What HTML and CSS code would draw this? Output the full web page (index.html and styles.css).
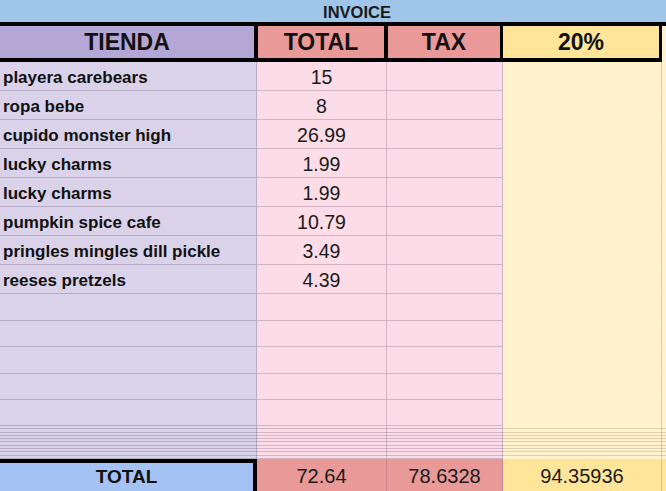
FILE: index.html
```html
<!DOCTYPE html>
<html lang="es">
<head>
<meta charset="utf-8">
<title>Invoice</title>
<link rel="stylesheet" href="styles.css">
</head>
<body>
<div class="sheet">
  <div class="band">INVOICE</div>
  <div class="head">
    <div class="hcells">
      <div class="h h-store">TIENDA</div>
      <div class="h h-total">TOTAL</div>
      <div class="h h-tax">TAX</div>
      <div class="h h-pct">20%</div>
    </div>
    <div class="h-extra"></div>
  </div>
  <div class="grid">
    <div class="c c1">playera carebears</div><div class="c c2">15</div><div class="c c3"></div><div class="c c4"></div><div class="c c5"></div>
    <div class="c c1">ropa bebe</div><div class="c c2">8</div><div class="c c3"></div><div class="c c4"></div><div class="c c5"></div>
    <div class="c c1">cupido monster high</div><div class="c c2">26.99</div><div class="c c3"></div><div class="c c4"></div><div class="c c5"></div>
    <div class="c c1">lucky charms</div><div class="c c2">1.99</div><div class="c c3"></div><div class="c c4"></div><div class="c c5"></div>
    <div class="c c1">lucky charms</div><div class="c c2">1.99</div><div class="c c3"></div><div class="c c4"></div><div class="c c5"></div>
    <div class="c c1">pumpkin spice cafe</div><div class="c c2">10.79</div><div class="c c3"></div><div class="c c4"></div><div class="c c5"></div>
    <div class="c c1">pringles mingles dill pickle</div><div class="c c2">3.49</div><div class="c c3"></div><div class="c c4"></div><div class="c c5"></div>
    <div class="c c1">reeses pretzels</div><div class="c c2">4.39</div><div class="c c3"></div><div class="c c4"></div><div class="c c5"></div>
    <div class="c c1"></div><div class="c c2"></div><div class="c c3"></div><div class="c c4"></div><div class="c c5"></div>
    <div class="c c1"></div><div class="c c2"></div><div class="c c3"></div><div class="c c4"></div><div class="c c5"></div>
    <div class="c c1"></div><div class="c c2"></div><div class="c c3"></div><div class="c c4"></div><div class="c c5"></div>
    <div class="c c1"></div><div class="c c2"></div><div class="c c3"></div><div class="c c4"></div><div class="c c5"></div>
    <div class="c c1"></div><div class="c c2"></div><div class="c c3"></div><div class="c c4"></div><div class="c c5"></div>
    <div class="c c1 stripe"></div><div class="c c2 stripe"></div><div class="c c3 stripe"></div><div class="c c4 stripe"></div><div class="c c5 stripe"></div>
  </div>
  <div class="totals">
    <div class="t t-label">TOTAL</div>
    <div class="t t-red">72.64</div>
    <div class="t t-red">78.6328</div>
    <div class="t t-yellow">94.35936</div>
    <div class="t t-yellow t-extra"></div>
  </div>
</div>
</body>
</html>
```

FILE: styles.css
```css
* { box-sizing: border-box; }
html, body {
  margin: 0;
  padding: 0;
  background: #ffffff;
}
body {
  font-family: "Liberation Sans", Arial, sans-serif;
  color: #111;
  width: 666px;
  height: 491px;
  overflow: hidden;
}
.sheet {
  width: 666px;
}
.band {
  height: 22px;
  background: #9fc5e8;
  font-weight: bold;
  font-size: 16.5px;
  line-height: 24px;
  text-align: center;
  padding-left: 48px;
  color: #1a1a1a;
}
.head {
  display: flex;
  height: 40px;
}
.hcells {
  width: 662px;
  background: #000;
  padding: 4px 0;
  display: flex;
}
.h {
  height: 32px;
  font-weight: bold;
  font-size: 23px;
  line-height: 33px;
  text-align: center;
  color: #111;
}
.h-store { width: 254px; margin-right: 4px; background: #b4a7d6; }
.h-total { width: 126px; margin-right: 4px; background: #ea9999; }
.h-tax { width: 112px; margin-right: 3px; background: #ea9999; }
.h-pct { width: 156px; background: #ffe599; }
.h-extra {
  flex: 1;
  background: #fff2cc;
  border-top: 4px solid #000;
}
.grid {
  display: grid;
  grid-template-columns: 257px 130px 116px 159px 1fr;
  grid-template-rows: repeat(8, 29px) 27px 26px 27px 26px 26px 33px;
}
.c {
  border-right: 1px solid rgba(60, 40, 70, 0.22);
  border-bottom: 1px solid rgba(60, 40, 70, 0.22);
  display: flex;
  align-items: center;
  white-space: nowrap;
  overflow: hidden;
  padding-top: 3px;
}
.c1 {
  background: #d9d2e9;
  font-weight: bold;
  font-size: 17px;
  padding-left: 3px;
}
.c2 {
  background: #fcdce7;
  font-size: 19.5px;
  justify-content: center;
  color: #1a1a1a;
}
.c3 { background: #fcdce7; }
.c4 {
  background: #fff2cc;
  border-bottom-color: transparent;
  border-right-color: rgba(90, 70, 30, 0.2);
}
.c5 {
  background: #fff2cc;
  border-right: none;
  border-bottom-color: transparent;
}
.stripe {
  background-image: repeating-linear-gradient(
    to bottom,
    transparent 0,
    transparent 2.3px,
    rgba(60, 40, 70, 0.22) 2.3px,
    rgba(60, 40, 70, 0.22) 3.3px
  );
}
.c4.stripe, .c5.stripe {
  background-image: repeating-linear-gradient(
    to bottom,
    transparent 0,
    transparent 2.3px,
    rgba(90, 70, 30, 0.2) 2.3px,
    rgba(90, 70, 30, 0.2) 3.3px
  );
}
.totals {
  display: grid;
  grid-template-columns: 257px 130px 116px 159px 1fr;
  height: 32px;
}
.t {
  display: flex;
  align-items: center;
  justify-content: center;
  font-size: 20px;
  padding-top: 3px;
  color: #1a1a1a;
  border-right: 1px solid rgba(60, 40, 70, 0.18);
}
.t-label {
  background: #a4c2f4;
  border-top: 4px solid #000;
  border-right: 4px solid #000;
  font-weight: bold;
  font-size: 19px;
  padding-top: 0;
  color: #111;
}
.t-red { background: #ea9999; }
.t-yellow { background: #ffe599; }
.t-extra { border-right: none; }
```
